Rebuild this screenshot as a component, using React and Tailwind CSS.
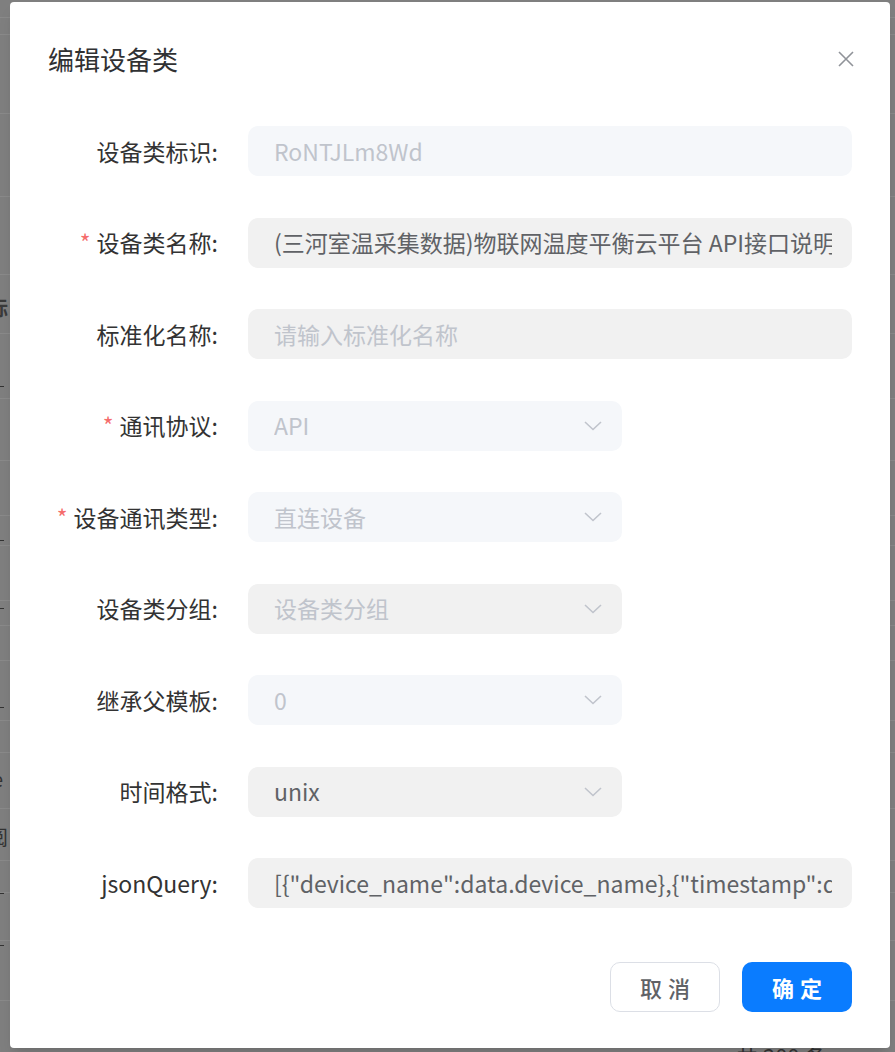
import React from 'react';

const FONT = { fontFamily: '"Noto Sans CJK SC", "Noto Sans", sans-serif' };

function Chevron() {
  return (
    <svg width="18" height="10" viewBox="0 0 18 10" fill="none" className="shrink-0">
      <path d="M1 1l8 7.5L17 1" stroke="#c0c4cc" strokeWidth="1.6" />
    </svg>
  );
}

function Field({ label, required, value, placeholder, disabled, select, wide = true }) {
  const bg = disabled ? 'bg-[#f5f7fa]' : 'bg-[#f1f1f1]';
  const color = value && !disabled ? 'text-[#606266]' : 'text-[#c0c4cc]';
  return (
    <div className="flex items-center h-[50px]">
      <div className="w-[200px] pr-[30px] text-right text-[23px] text-[#333] whitespace-nowrap">
        {required && <span className="text-[#f56c6c] mr-[6px]">*</span>}
        {label}:
      </div>
      <div
        className={`${wide ? 'w-[604px]' : 'w-[374px]'} h-[50px] ${bg} rounded-[10px] flex items-center pl-[26px] pr-[20px] overflow-hidden`}
      >
        <span className={`flex-1 text-[23px] whitespace-nowrap overflow-hidden ${color}`}>
          {value || placeholder}
        </span>
        {select && <Chevron />}
      </div>
    </div>
  );
}

export default function App() {
  const bgLines = [17, 34, 113, 196, 274, 333, 398, 460, 515, 545, 600, 625, 660, 720, 752, 808, 860, 892, 940, 1000];
  return (
    <div className="relative w-[895px] h-[1052px] overflow-hidden bg-[#7f7f7f]" style={FONT}>
      {/* page under the mask */}
      <div className="absolute inset-0">
        {bgLines.map((y) => (
          <div key={y} className="absolute left-0 right-0 h-px bg-[#8a8a8a]" style={{ top: y }} />
        ))}
        <div className="absolute left-[-12px] top-[293px] text-[20px] font-bold text-[#3a3a3a]">标</div>
        <div className="absolute left-[-4px] top-[386px] w-[8px] h-px bg-[#333]" />
        <div className="absolute left-[-4px] top-[540px] w-[8px] h-px bg-[#333]" />
        <div className="absolute left-[-4px] top-[608px] w-[8px] h-px bg-[#333]" />
        <div className="absolute left-[-4px] top-[707px] w-[8px] h-px bg-[#333]" />
        <div className="absolute left-[-8px] top-[764px] text-[20px] text-[#333]">e</div>
        <div className="absolute left-[-12px] top-[822px] text-[20px] text-[#333]">阅</div>
        <div className="absolute left-[-4px] top-[893px] w-[8px] h-px bg-[#333]" />
        <div className="absolute left-[-4px] top-[945px] w-[8px] h-px bg-[#333]" />
        <div className="absolute left-[736px] top-[1044px] text-[22px] leading-none text-[#333]">共 200 条</div>
      </div>

      {/* dialog */}
      <div className="absolute left-[10px] top-[2px] w-[880px] h-[1046px] bg-white rounded-[4px] shadow-lg pt-[40px] px-[38px]">
        <div className="flex items-center justify-between h-[34px]">
          <h2 className="text-[26px] text-[#303133] leading-[34px]">编辑设备类</h2>
          <svg width="18" height="18" viewBox="0 0 18 18" className="mr-[-3px]">
            <path d="M2 2l14 14M16 2L2 16" stroke="#909399" strokeWidth="1.6" />
          </svg>
        </div>

        <div className="mt-[50px] flex flex-col gap-[41.5px]">
          <Field label="设备类标识" value="RoNTJLm8Wd" disabled />
          <Field label="设备类名称" required value="(三河室温采集数据)物联网温度平衡云平台 API接口说明文档" />
          <Field label="标准化名称" placeholder="请输入标准化名称" />
          <Field label="通讯协议" required value="API" disabled select wide={false} />
          <Field label="设备通讯类型" required value="直连设备" disabled select wide={false} />
          <Field label="设备类分组" placeholder="设备类分组" select wide={false} />
          <Field label="继承父模板" value="0" disabled select wide={false} />
          <Field label="时间格式" value="unix" select wide={false} />
          <Field
            label="jsonQuery"
            value={'[{"device_name":data.device_name},{"timestamp":data.timestamp}]'}
          />
        </div>

        <div className="mt-[54px] flex justify-end gap-[22px]">
          <button className="w-[110px] h-[50px] rounded-[10px] border border-[#dcdfe6] bg-white text-[22px] font-medium text-[#606266] tracking-[6px] pl-[6px]">
            取消
          </button>
          <button className="w-[110px] h-[50px] rounded-[10px] bg-[#0a7cff] text-[22px] font-bold text-white tracking-[6px] pl-[6px]">
            确定
          </button>
        </div>
      </div>
    </div>
  );
}
